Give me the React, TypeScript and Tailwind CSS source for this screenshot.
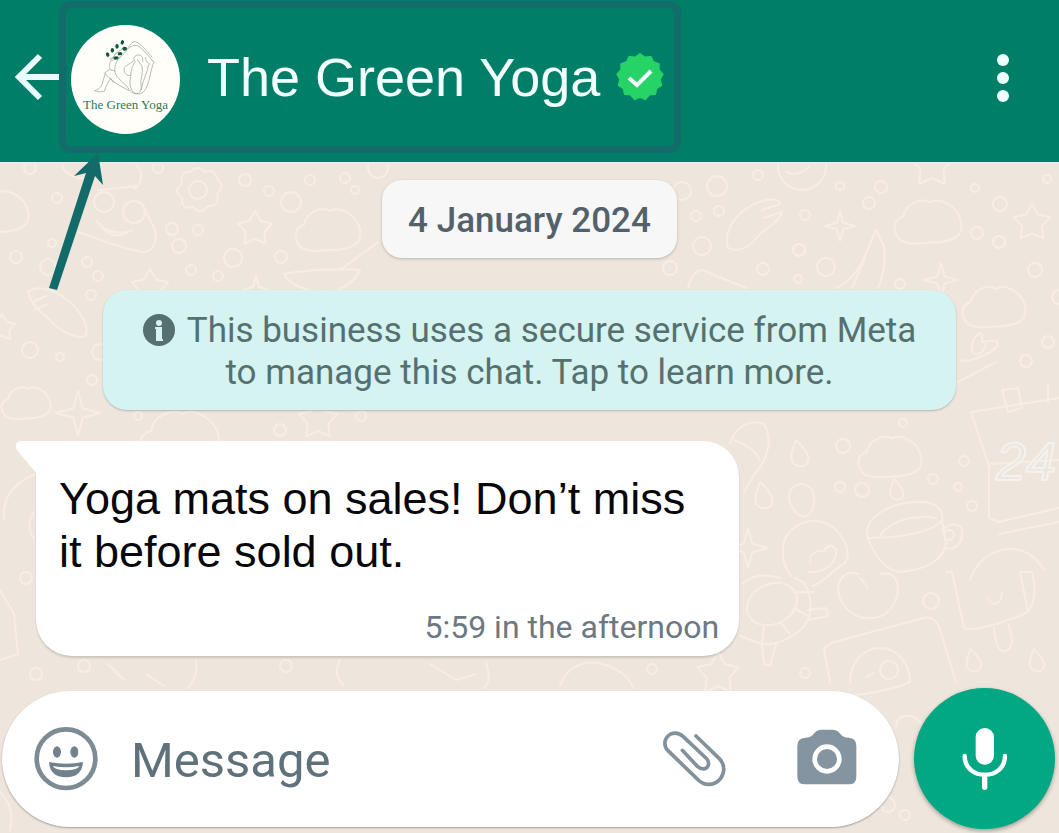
import type { ReactNode } from 'react';

type Spot = [x: number, y: number, size: number];

const bubbles: Spot[] = [
  [30, 168, 6], [158, 168, 5], [57, 198, 5], [245, 180, 6], [269, 191, 5], [291, 202, 10],
  [172, 229, 6], [198, 230, 5], [179, 246, 7], [233, 258, 9], [281, 257, 6], [52, 243, 4],
  [16, 257, 6], [48, 267, 8], [87, 262, 5], [98, 276, 5], [191, 270, 5], [218, 276, 5],
  [91, 295, 5], [30, 350, 8], [60, 357, 4], [92, 380, 5], [310, 180, 5], [345, 178, 5],
  [355, 190, 4], [378, 168, 10], [100, 352, 8], [280, 430, 6], [138, 416, 4], [361, 416, 5],
  [682, 191, 9], [717, 186, 10], [758, 175, 5], [696, 216, 5], [719, 211, 5], [702, 246, 9],
  [670, 268, 7], [763, 269, 6], [799, 250, 6], [826, 267, 9], [798, 279, 4], [805, 215, 5],
  [869, 203, 6], [840, 186, 4], [881, 187, 6], [975, 188, 4], [1000, 204, 7], [977, 233, 6],
  [999, 242, 6], [1035, 270, 7], [1059, 297, 7], [1048, 342, 6], [1026, 361, 6], [900, 284, 5],
  [903, 423, 4], [1047, 179, 4], [843, 446, 7], [840, 487, 5], [862, 490, 7], [964, 461, 5],
  [933, 479, 5], [958, 487, 4], [972, 506, 5], [931, 601, 8], [805, 673, 5], [26, 578, 6],
  [36, 674, 6], [84, 666, 6], [286, 666, 6], [652, 669, 5], [888, 805, 7], [905, 815, 5],
];

const clouds: Spot[] = [
  [328, 230, 66], [26, 403, 50], [-4, 212, 66], [928, 222, 68], [994, 307, 64], [890, 457, 64],
  [180, 437, 80],
];

const stars: Spot[] = [
  [255, 229, 18], [150, 288, 19], [2, 328, 14], [932, 166, 22], [1032, 223, 19], [318, 420, 20],
  [718, 674, 22],
];

const sparkles: Spot[] = [
  [78, 413, 22], [256, 290, 14], [840, 226, 15], [941, 280, 17], [748, 548, 20],
];

const drops: Spot[] = [
  [800, 453, 14], [764, 495, 14], [897, 489, 11], [974, 660, 12], [1037, 660, 12],
];

function burst(cx: number, cy: number, outer: number, inner: number, points: number) {
  const coords: string[] = [];
  for (let i = 0; i < points * 2; i++) {
    const r = i % 2 === 0 ? outer : inner;
    const a = (Math.PI * i) / points - Math.PI / 2;
    coords.push(`${(cx + r * Math.cos(a)).toFixed(1)},${(cy + r * Math.sin(a)).toFixed(1)}`);
  }
  return coords.join(' ');
}

function Wallpaper() {
  return (
    <svg
      className="pointer-events-none absolute inset-0 h-full w-full"
      fill="none"
      stroke="#f7ede4"
      strokeWidth="2"
      strokeLinecap="round"
      strokeLinejoin="round"
      aria-hidden="true"
    >
      {bubbles.map(([x, y, r]) => (
        <circle key={`${x}-${y}`} cx={x} cy={y} r={r} />
      ))}
      {clouds.map(([x, y, w]) => (
        <path
          key={`${x}-${y}`}
          transform={`translate(${x} ${y}) scale(${w / 66})`}
          vectorEffect="non-scaling-stroke"
          d="M-24-5C-22-18-6-24 2-19C12-25 30-14 32 0C36 16 18 20 2 20C-16 22-30 22-32 8C-34 2-30-4-24-5Z"
        />
      ))}
      {stars.map(([x, y, r]) => (
        <polygon key={`${x}-${y}`} points={burst(x, y, r, r * 0.55, 5)} />
      ))}
      {sparkles.map(([x, y, r]) => (
        <polygon key={`${x}-${y}`} points={burst(x, y, r, r * 0.3, 4)} />
      ))}
      {drops.map(([x, y, r]) => (
        <path
          key={`${x}-${y}`}
          transform={`translate(${x} ${y}) scale(${r / 14})`}
          d="M-4-13C-7-4-10 2-8 8C-4 15 6 15 8 8C10 1 2-7-4-13Z"
        />
      ))}

      {/* flower */}
      <circle cx="198" cy="190" r="9" />
      <path d="M190 172q8-8 15 0q10-4 12 7q9 8 0 15q3 12-9 12q-7 10-15 1q-12 3-11-9q-10-8 0-14q-3-12 8-12Z" />

      {/* clown slice */}
      <path d="M62 165c2 10 16 14 28 14M98 190l40-4M136 165c8 6 6 20-2 24M78 232c24 8 48 18 66 20c10 0 14-14 10-24l-10-20" />
      <circle cx="104" cy="202" r="10" />
      <circle cx="134" cy="212" r="11" />
      <path d="M96 220c8 12 26 16 36 10M100 224c6 12 20 14 28 8" />

      {/* mittens */}
      <path d="M28 292c10-8 24-2 34 4c14 10 28 26 24 40c-12 4-30-8-38-18c-8-6-18-16-20-26ZM32 302l14-6M34 310l14-6" />
      <path d="M780 202c-8-6-26 0-38 10c-12 10-18 24-14 36c14 6 24-4 32-14c10-8 20-14 22-22M762 210l18-6M764 218l18-6" />

      {/* boat */}
      <path d="M284 274c20-4 50-6 76-4c-6 14-24 24-40 22c-14-2-30-6-36-18ZM340 270l38-28" />

      {/* smile, banana and chilli */}
      <circle cx="802" cy="166" r="24" />
      <path d="M786 172c8 4 16 2 24-6M836 288c20-8 28-30 34-44l6-14l8 16c2 14 0 28-6 42M852 288l14-32M688 288c2-10 8-18 14-18l44 18" />
      <path d="M960 360c10 4 38-10 38-16s-12-2-16-2c2-18-12-4-10 8c2 8 12 4 14-6M958 382l38-20" />

      {/* calendar */}
      <path d="M1059 398l-88 14l18 54v52l10 4l60-14M989 464l70-4M999 534l60-12M1002 390l16-2l4 20l-14 4ZM1048 386v16" />
      <text
        x="996"
        y="480"
        fontFamily="Liberation Sans, sans-serif"
        fontSize="54"
        fontStyle="italic"
        stroke="#f4f1ef"
      >
        24
      </text>

      {/* cup */}
      <path d="M868 538c-6-20 20-34 46-36c20-2 30 6 28 18c-10 14-50 18-74 18c6 16 16 32 32 34c20-2 42-8 46-28l-4-24M880 536c10-16 36-22 56-18M942 530c8-8 22-8 20 4c0 14-12 16-18 14" />
      <circle cx="949" cy="535" r="5" />

      {/* parrot, egg and heart */}
      <path d="M791 576c-12-16-12-40 6-50c16-10 36-4 44 10c8 12 10 24 0 30c-8 4-14 14-28 20M808 572c16 2 30-10 28-22c-4-8-12-2-12 2c-4-4-16 2-14 10" />
      <path d="M801 484c12 0 14 12 13 20c-4 16-14 14-18 8c-10-10-10-26 5-28ZM730 444c4-16 20-26 34-20c10 16 2 38-8 48l-12 20M734 440c12 4 22 12 26 20" />

      {/* rubber ring */}
      <ellipse cx="772" cy="604" rx="26" ry="20" transform="rotate(-25 772 604)" />
      <path d="M742 584c10-10 24-10 38-6M794 578c14 2 18 20 16 36c-4 18-30 32-48 30l-22-8M797 592h16M794 608l14 8M780 622l10 12M764 626l-2 18l2 20l6 2l6-22M808 610l18-2l2 8l-20 4" />

      {/* apple */}
      <path d="M858 574c-14-4-20 6-20 16c2 18 18 30 34 28c16 0 26-16 26-30c0-10-8-18-18-14M860 578l8 10" />

      {/* camera */}
      <path d="M830 682l-6-32c0-4 6-6 10-8l90-24c8-2 14 4 16 12l16 52" />
      <path d="M850 682c0-20 14-34 30-34s30 14 30 34M866 677l8-4" />
      <circle cx="889" cy="670" r="9" />

      {/* ice lolly */}
      <path d="M946 572h6l12 56c10 4 40-6 60-14c12-6 12-26 8-42h-12l8 40M970 580c12-34 54-44 74-10M994 628c2 20 6 26 14 22c6-4 4-16 0-26M988 598c4 10 14 6 14-6" />

      {/* scraps between the bubbles */}
      <path d="M36 474C10 484 2 500 4 520M34 512c-6 8-6 20 0 26M0 590l14 24l4 40l-18 6M108 664l16 16M146 674l18 12M196 660c2 12-2 20-8 28M340 660c-6 10-4 18 4 26M430 664l26 16l20-6M486 662c4 16 4 20-2 26M560 686c10-28 40-30 66-10l8 12" />
      <path d="M800 700c10 0 80-4 110-18M896 728c0-18 20-14 28-2M0 792c10 10 14 22 10 38" />
    </svg>
  );
}

function YogaLogo() {
  return (
    <svg className="absolute inset-0 h-full w-full" viewBox="33 28 327 327" fill="none" aria-hidden="true">
      <g stroke="#8f9d94" strokeWidth="2" strokeLinecap="round" strokeLinejoin="round">
        <path d="M150 160C146 148 150 138 156 130C162 120 168 114 172 110M150 130L160 124M165 116L188 98M168 128L184 112" />
        {/* bent leg and foot */}
        <path d="M164 166C154 160 142 162 136 172C132 184 130 196 126 206C122 216 114 222 104 225C112 229 124 230 134 226C136 214 144 200 152 188" />
        <path d="M134 172C150 192 172 208 206 224M152 188C156 192 158 196 160 200" />
        {/* back and raised arms */}
        <path d="M156 136C160 130 168 128 180 124C190 118 196 110 202 100C208 90 216 76 228 78C244 86 260 106 276 124M206 98C214 90 224 88 232 90C246 98 262 116 280 138" />
        <path d="M180 126C162 142 160 168 172 184C184 200 198 204 208 222C216 234 232 238 246 232C258 224 264 206 268 190C272 170 276 152 282 138" />
        {/* head and hair */}
        <path d="M222 134C220 124 226 118 236 118C246 118 250 128 248 138M222 134C214 146 194 146 192 162C192 174 204 184 212 178M226 136C210 160 214 178 210 196C208 214 218 234 230 234C244 232 246 214 242 200C244 182 250 168 246 152C242 144 236 140 232 132M270 146C262 142 256 134 256 126M266 148C262 172 248 192 244 222" />
      </g>
      <g fill="#0c5a3e">
        <ellipse cx="143" cy="117" rx="5" ry="7" transform="rotate(-20 143 117)" />
        <ellipse cx="157" cy="104" rx="5" ry="7" />
        <ellipse cx="171" cy="92" rx="5" ry="7" />
        <ellipse cx="187" cy="80" rx="5" ry="7" transform="rotate(20 187 80)" />
        <ellipse cx="194" cy="99" rx="7" ry="6" />
        <ellipse cx="180" cy="114" rx="7" ry="5" />
        <ellipse cx="168" cy="127" rx="8" ry="5" />
      </g>
    </svg>
  );
}

function VerifiedBadge() {
  return (
    <svg className="h-12 w-12 shrink-0" viewBox="0 0 48 48" role="img" aria-label="Verified">
      <polygon points={burst(24, 24, 24, 21, 13)} fill="#25d366" />
      <path d="M13 25L21 32L35 18" fill="none" stroke="#fff" strokeWidth="4" />
    </svg>
  );
}

function PointerArrow() {
  return (
    <svg className="absolute top-[153px] left-12 h-[138px] w-14" viewBox="48 153 56 138" fill="#126a69" aria-hidden="true">
      <path d="M49 288L86 173L74 176L98 153L103 185L95 176L57 290Z" />
    </svg>
  );
}

function IconButton({ label, className, children }: { label: string; className: string; children: ReactNode }) {
  return (
    <button type="button" aria-label={label} className={`shrink-0 ${className}`}>
      {children}
    </button>
  );
}

function ChatHeader() {
  return (
    <header className="relative flex h-[164px] items-start border-b-2 border-[#e2f0e9] bg-[#017e68] pt-px pl-[13px]">
      <IconButton label="Back" className="mt-[52px] h-12 w-[46px]">
        <svg className="h-12 w-[46px]" viewBox="0 0 46 48" fill="none" stroke="#e8fdfc" strokeWidth="6">
          <path d="M27 3L6 24L27 45M5 24H46" />
        </svg>
      </IconButton>
      <div className="flex h-[152px] items-center rounded-xl border-[7px] border-[#136b6a] pr-[10px] pl-[5px]">
        <div className="relative mt-1 h-[109px] w-[109px] shrink-0 overflow-hidden rounded-full bg-[#fffef8]">
          <YogaLogo />
          <span className="absolute inset-x-0 top-[72px] text-center font-['Liberation_Serif',serif] text-[13px] leading-4 whitespace-nowrap text-[#2b7a5c]">
            The Green Yoga
          </span>
        </div>
        <h1 className="ml-[27px] font-['Liberation_Sans',Arial,sans-serif] text-[54px] leading-[60px] whitespace-nowrap text-[#f2fffd]">
          The Green Yoga
        </h1>
        <div className="ml-4">
          <VerifiedBadge />
        </div>
      </div>
      <IconButton label="More options" className="mt-[49px] mr-10 ml-auto h-14 w-8">
        <svg className="h-14 w-8" viewBox="0 0 32 56" fill="#effffd">
          <circle cx="16" cy="10" r="6" />
          <circle cx="16" cy="28" r="6" />
          <circle cx="16" cy="46" r="6" />
        </svg>
      </IconButton>
      <PointerArrow />
    </header>
  );
}

function BusinessNotice() {
  return (
    <button
      type="button"
      className="mt-8 rounded-3xl bg-[#d5f3f1] px-10 pt-5 pb-4 text-center text-[35px] leading-[42px] text-[#56706f] shadow-[0_1px_2px_#00000038]"
    >
      <svg className="mt-1 mr-3 inline-block h-8 w-8 align-top" viewBox="0 0 32 32" aria-hidden="true">
        <circle cx="16" cy="16" r="16" fill="#56706f" />
        <circle cx="16" cy="9" r="3" fill="#d5f3f1" />
        <path d="M12 13H19V25H20V27H13V15H12Z" fill="#d5f3f1" />
      </svg>
      This business uses a secure service from Meta
      <br />
      to manage this chat. Tap to learn more.
    </button>
  );
}

function IncomingMessage() {
  return (
    <article className="relative mt-[31px] ml-9 flex h-[215px] flex-col self-start rounded-[36px] rounded-tl-none bg-white pt-[31px] pr-[20px] pb-2 pl-[23px] shadow-[0_2px_2px_#00000024]">
      <svg className="absolute top-0 -left-5 h-9 w-6" viewBox="0 0 24 36" fill="#fff" aria-hidden="true">
        <path d="M24 0H5C0 0-1 5 1 9L21 33H24Z" />
      </svg>
      <p className="pr-[34px] font-['Liberation_Sans',Arial,sans-serif] text-[45px] leading-[53px] text-[#08080c]">
        Yoga mats on sales! Don’t miss
        <br />
        it before sold out.
      </p>
      <time className="mt-auto self-end text-[32px] leading-[42px] text-[#6c7982]">5:59 in the afternoon</time>
    </article>
  );
}

function Composer() {
  return (
    <form className="flex items-center gap-[15px] pt-8 pr-1 pb-1 pl-[2px]" onSubmit={(e) => e.preventDefault()}>
      <div className="flex h-[136px] min-w-0 flex-1 items-center rounded-full bg-white pr-[42px] pl-8 shadow-[0_1px_2px_#00000050]">
        <IconButton label="Emoji" className="h-16 w-16">
          <svg className="h-16 w-16" viewBox="102 141 192 192" fill="#72828c">
            <circle cx="198" cy="236" r="88" fill="none" stroke="#7d8b95" strokeWidth="14" />
            <ellipse cx="171" cy="216" rx="12" ry="17" />
            <ellipse cx="223" cy="216" rx="12" ry="17" />
            <path d="M147 246Q198 256 249 246Q246 292 198 292Q150 292 147 246Z" />
            <path d="M159 258Q198 266 238 258Q234 270 198 271Q162 270 159 258Z" fill="#fff" />
          </svg>
        </IconButton>
        <input
          type="text"
          aria-label="Message"
          placeholder="Message"
          className="ml-[33px] min-w-0 flex-1 bg-transparent pt-1 text-[49px] leading-[60px] text-[#5f727c] outline-none placeholder:text-[#5f727c]"
        />
        <IconButton label="Attach" className="h-16 w-[70px]">
          <svg
            className="h-16 w-[70px]"
            viewBox="60 141 210 192"
            fill="none"
            stroke="#82919b"
            strokeWidth="11"
            strokeLinecap="round"
          >
            <path d="M168 168L238 236C256 254 254 278 242 295C224 319 194 317 177 302L84 212C68 195 74 172 92 162C105 157 119 160 129 169L200 236C210 248 206 261 195 266C186 268 178 264 172 259L127 211" />
          </svg>
        </IconButton>
        <IconButton label="Camera" className="mb-1 ml-[67px] h-14 w-[60px]">
          <svg className="h-14 w-[60px]" viewBox="470 145 180 168">
            <path
              fill="#8494a0"
              d="M471 195Q471 172 495 171Q512 171 520 160Q528 147 545 147H575Q592 147 600 160Q608 171 625 171Q648 172 648 195V288Q648 311 625 311H495Q471 311 471 288Z"
            />
            <circle cx="560" cy="235" r="37" fill="none" stroke="#fff" strokeWidth="14" />
          </svg>
        </IconButton>
      </div>
      <IconButton
        label="Record voice message"
        className="flex h-[141px] w-[141px] items-center justify-center rounded-full bg-[#02a884] shadow-[0_2px_4px_#00000050]"
      >
        <svg className="h-[65px] w-[50px]" viewBox="960 140 150 195" fill="none" stroke="#fff">
          <rect x="1007" y="146" width="55" height="110" rx="27" fill="#fff" stroke="none" />
          <path d="M974 230C974 305 1095 305 1095 230" strokeWidth="13" strokeLinecap="round" />
          <path d="M1034 290V324" strokeWidth="16" strokeLinecap="round" />
        </svg>
      </IconButton>
    </form>
  );
}

export default function App() {
  return (
    <div className="relative flex min-h-screen flex-col bg-[#eee6dc] font-[Roboto,sans-serif]">
      <Wallpaper />
      <ChatHeader />
      <main className="relative flex flex-1 flex-col items-center pt-4">
        <time
          dateTime="2024-01-04"
          className="rounded-[20px] bg-[#f7f7f7] px-[26px] pt-5 pb-4 text-[35px] leading-[42px] font-medium text-[#53616b] shadow-[0_1px_3px_#00000038]"
        >
          4 January 2024
        </time>
        <BusinessNotice />
        <IncomingMessage />
        <div className="mt-auto w-full">
          <Composer />
        </div>
      </main>
    </div>
  );
}
